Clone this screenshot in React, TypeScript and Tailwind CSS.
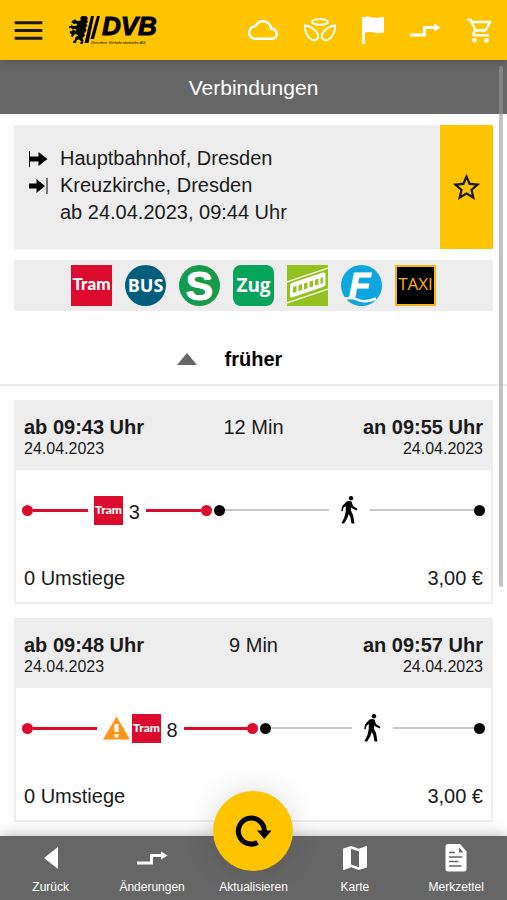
import type { ReactNode } from "react";
import {
  MdCloudQueue,
  MdMap,
  MdMenu,
  MdOutlineShoppingCart,
  MdStarBorder,
} from "react-icons/md";

type Trip = {
  departure: string;
  arrival: string;
  date: string;
  duration: string;
  line: string;
  warning: boolean;
  changes: string;
  price: string;
  rideShare: number;
};

const trips: Trip[] = [
  {
    departure: "ab 09:43 Uhr",
    arrival: "an 09:55 Uhr",
    date: "24.04.2023",
    duration: "12 Min",
    line: "3",
    warning: false,
    changes: "0 Umstiege",
    price: "3,00 €",
    rideShare: 41,
  },
  {
    departure: "ab 09:48 Uhr",
    arrival: "an 09:57 Uhr",
    date: "24.04.2023",
    duration: "9 Min",
    line: "8",
    warning: true,
    changes: "0 Umstiege",
    price: "3,00 €",
    rideShare: 51,
  },
];

const Logo = () => (
  <svg width="88" height="32" viewBox="0 0 88 32" className="overflow-visible" aria-hidden="true">
    {/* Lion */}
    <path d="M9 4l2-2 4.500.3 1.500 2-1 2 1 1.700-2 1.500 1.500 2-2 2.500 1 2.500-2.500 3 1 2-2.500 2.500 1 3-1 3-2.500-.3 1-2.500-2-2-2.500 1-.3 2.500-3.200.3.2-2 1.500-.5.5-3 3-2-2-1.500-2 .5-1.500 2.500-1.700-.5.7-2.500-2-1 .3-2 2 .3.7-1.500 2.500 1 1.500-.5-1.500-1.500-2.500.8-1.500-1.500-2 .2-.2-2 2-.2.5-1.500 1.500 1.500 3 0 1.500-1-1.500-1.500-3 .5L2 9l-1.500-.5.5-2 1.500.3L3.500 5l2 1.800 2.500.2 2-1z" />
    {/* Slashes */}
    <path d="M20 2h3l-5.500 27h-4zM26 2h3l-6 23h-3.500z" />
    <text
      x="31"
      y="21"
      fontFamily="Liberation Sans, sans-serif"
      fontSize="26"
      fontWeight="700"
      fontStyle="italic"
      stroke="#000"
    >
      DVB
    </text>
    <text
      x="20"
      y="30"
      fontFamily="Liberation Sans, sans-serif"
      fontSize="4"
      fontStyle="italic"
    >
      Dresdner Verkehrsbetriebe AG
    </text>
  </svg>
);

const AngelIcon = () => (
  <svg
    width="34"
    height="26"
    viewBox="0 0 36 26"
    fill="none"
    stroke="currentColor"
    strokeWidth="2"
    strokeLinejoin="round"
    aria-hidden="true"
  >
    <ellipse cx="18" cy="4.500" rx="8.500" ry="3" />
    <path d="M2 8c-.5 5.500 2.500 13 7.500 15.500 4 1.500 7.500-1.500 6.500-5C15 13.500 8 9 2 8z" />
    <path d="M34 8c.5 5.500-2.500 13-7.500 15.500-4 1.500-7.500-1.500-6.500-5C21 13.500 28 9 34 8z" />
  </svg>
);

const FlagIcon = () => (
  <svg width="22" height="28" viewBox="0 0 22 28" aria-hidden="true">
    <path
      d="M0 1h3c4-1.500 7 1 11 .8 3 0 5-.8 8-.8v15.500c-3 .8-5.500 1.200-8.500.5-4-1-7-1.500-10.500-.5V28H0z"
      fill="currentColor"
    />
  </svg>
);

const ChangesIcon = () => (
  <svg width="32" height="16" viewBox="0 0 32 16" aria-hidden="true">
    <path
      d="M1 13h14.500V5.500H26"
      fill="none"
      stroke="currentColor"
      strokeWidth="3"
    />
    <path d="M25 1.500l6.500 4-6.500 4z" fill="currentColor" />
  </svg>
);

const FromIcon = () => (
  <svg width="20" height="18" viewBox="0 0 20 18" aria-hidden="true">
    <path d="M1 1h1v16H1z" />
    <path d="M2 6.500h8.500V2L19.500 9l-9 7v-4.500H2z" />
  </svg>
);

const ToIcon = () => (
  <svg width="20" height="18" viewBox="0 0 20 18" aria-hidden="true">
    <path d="M1 6.500h7.500V2l8.500 7-8.500 7v-4.500H1z" />
    <path d="M18.500 1h1v16h-1z" />
  </svg>
);

const TramIcon = ({ size }: { size: number }) => (
  <svg width={size} height={size} viewBox="0 0 41 41" aria-hidden="true">
    <rect width="41" height="41" fill="#dc0a2d" />
    <text
      x="20.500"
      y="25"
      textAnchor="middle"
      fontFamily="Lato, sans-serif"
      fontSize="17"
      fontWeight="900"
      fill="#fff"
    >
      Tram
    </text>
  </svg>
);

const BusIcon = () => (
  <svg width="41" height="41" viewBox="0 0 41 41" aria-hidden="true">
    <circle cx="20.500" cy="20.500" r="20.500" fill="#005e7c" />
    <text
      x="20.500"
      y="27"
      textAnchor="middle"
      fontFamily="Open Sans, sans-serif"
      fontSize="18"
      fontWeight="700"
      fill="#fff"
    >
      BUS
    </text>
  </svg>
);

const SBahnIcon = () => (
  <svg width="41" height="41" viewBox="0 0 41 41" className="overflow-visible" aria-hidden="true">
    <circle cx="20.500" cy="20.500" r="20.500" fill="#169b4d" />
    <text
      x="20.500"
      y="35"
      textAnchor="middle"
      fontFamily="Liberation Sans, sans-serif"
      fontSize="41"
      fontWeight="700"
      fill="#fff"
      stroke="#fff"
    >
      S
    </text>
  </svg>
);

const ZugIcon = () => (
  <svg width="41" height="41" viewBox="0 0 41 41" aria-hidden="true">
    <rect width="41" height="41" rx="8" fill="#06a35a" />
    <text
      x="20.500"
      y="27"
      textAnchor="middle"
      fontFamily="Open Sans, sans-serif"
      fontSize="19"
      fontWeight="700"
      fill="#fff"
    >
      Zug
    </text>
  </svg>
);

const FunicularIcon = () => (
  <svg width="41" height="41" viewBox="0 0 41 41" aria-hidden="true">
    <rect width="41" height="41" fill="#94c11f" />
    <g stroke="#fff" strokeWidth="1.300">
      <path d="M0 17L41 3M0 38l41-14" />
    </g>
    <path d="M3 20.500q0-2 2-2.700L36 7.500q2.500-.5 2.500 1.500v10.500q0 1.500-2 2.200L5 32.500q-2 .5-2-1.500z" fill="#fff" />
    <g fill="#94c11f">
      <path d="M6 22l3.500-1.200v6L6 28zM11.500 20.200l3.500-1.200v6l-3.500 1.200zM17 18.400l3.500-1.200v6L17 24.400zM22.500 16.600l3.500-1.200v6l-3.500 1.200zM28 14.800l3.500-1.200v6L28 20.800zM33.500 13l2.500-.8v6l-2.500.8z" />
    </g>
  </svg>
);

const FerryIcon = () => (
  <svg width="41" height="41" viewBox="0 0 41 41" aria-hidden="true">
    <circle cx="20.500" cy="20.500" r="20.500" fill="#0fa5de" />
    <text
      x="8"
      y="32"
      fontFamily="Liberation Sans, sans-serif"
      fontSize="35"
      fontWeight="700"
      fontStyle="italic"
      fill="#fff"
      stroke="#fff"
    >
      F
    </text>
    <path
      d="M3 34c5-1.500 9-1.500 13 .5s10 3 19-1"
      fill="none"
      stroke="#fff"
      strokeWidth="2.500"
    />
  </svg>
);

const TaxiIcon = () => (
  <svg width="41" height="41" viewBox="0 0 41 41" aria-hidden="true">
    <rect x="1" y="1" width="39" height="39" stroke="#f5b21a" strokeWidth="2" />
    <text
      x="20.500"
      y="25"
      textAnchor="middle"
      fontFamily="Open Sans, sans-serif"
      fontSize="17"
      fill="#f5b21a"
    >
      TAXI
    </text>
  </svg>
);

const WalkIcon = () => (
  <svg width="17" height="28" viewBox="0 0 17 28" aria-hidden="true">
    <circle cx="10" cy="2.300" r="2.200" />
    <path d="M5.500 5.500q2.500-1.200 5 0l1.500 4.500 4.500 3-.9 1.600-5-2.600-.5-1.200v4.200l1.900 4L13.500 27.500h-3l-1.200-6.500-1.600-3-1.400 4.200L3 27.800l-2.500-.8 2.800-5.500 1.400-6 .1-5.500-2.300 1.700-.8 3.500L.2 15l.9-4.800z" />
  </svg>
);

const WarningIcon = () => (
  <svg width="27" height="24" viewBox="0 0 27 24" aria-hidden="true">
    <path d="M13.500.5L27 23.500H0z" fill="#ff9417" />
    <path d="M11.500 8h4v8h-4zM11.500 18h4v3.500h-4z" fill="#fff" />
  </svg>
);

const RefreshIcon = () => (
  <svg width="37" height="32" viewBox="0 0 37 32" aria-hidden="true">
    <path
      d="M29.300 16.500A13 13 0 1 0 22.500 27.500"
      fill="none"
      stroke="#000"
      strokeWidth="5"
    />
    <path d="M22 15.500h14.500L29.300 24z" />
  </svg>
);

const BackIcon = () => (
  <svg width="14" height="24" viewBox="0 0 14 24" aria-hidden="true">
    <path d="M14 1v22L0 12z" fill="currentColor" />
  </svg>
);

const NoteIcon = () => (
  <svg width="22" height="28" viewBox="0 0 22 28" aria-hidden="true">
    <path
      d="M3 0h12l6.500 7.500V25q0 2.500-2.500 2.500H3Q.5 27.500.5 25V2.500Q.5 0 3 0z"
      fill="currentColor"
    />
    <path
      d="M4 8.500h6M4 13h13.500M4 17.500h9.500M4 22h12.500"
      stroke="#666"
      strokeWidth="1.500"
    />
    <path d="M14 3.500v5h4.500z" fill="#666" />
  </svg>
);

const transports = [
  { label: "Tram", icon: <TramIcon size={41} /> },
  { label: "Bus", icon: <BusIcon /> },
  { label: "S-Bahn", icon: <SBahnIcon /> },
  { label: "Zug", icon: <ZugIcon /> },
  { label: "Seilbahn", icon: <FunicularIcon /> },
  { label: "Fähre", icon: <FerryIcon /> },
  { label: "Taxi", icon: <TaxiIcon /> },
];

const Header = () => (
  <header className="sticky top-0 z-20 flex h-[60px] items-center justify-between bg-[#fec400] pl-2.5 pr-3 shadow-md">
    <div className="flex items-center gap-6">
      <button type="button" aria-label="Menü">
        <MdMenu size={37} />
      </button>
      <a href="#" aria-label="DVB" className="text-black">
        <Logo />
      </a>
    </div>
    <nav className="flex items-center gap-[25px] text-white">
      <a href="#wetter" aria-label="Wetter">
        <MdCloudQueue size={30} />
      </a>
      <a href="#engel" aria-label="Engel">
        <AngelIcon />
      </a>
      <a href="#meldungen" aria-label="Meldungen">
        <FlagIcon />
      </a>
      <a href="#aenderungen" aria-label="Änderungen">
        <ChangesIcon />
      </a>
      <a href="#warenkorb" aria-label="Warenkorb">
        <MdOutlineShoppingCart size={29} />
      </a>
    </nav>
  </header>
);

const SearchSummary = () => (
  <section className="flex bg-[#ededed]">
    <div className="grid flex-1 grid-cols-[auto_1fr] content-start items-center gap-x-3 pt-5 pb-[23px] pl-3.5 leading-[27px]">
      <FromIcon />
      <p>Hauptbahnhof, Dresden</p>
      <ToIcon />
      <p>Kreuzkirche, Dresden</p>
      <p className="col-start-2">ab 24.04.2023, 09:44 Uhr</p>
    </div>
    <button
      type="button"
      aria-label="Merken"
      className="flex w-[53px] items-center justify-center bg-[#fec400]"
    >
      <MdStarBorder size={33} />
    </button>
  </section>
);

const RideLeg = ({ trip }: { trip: Trip }) => (
  <div className="flex items-center" style={{ width: `${trip.rideShare}%` }}>
    <span className="size-[11px] rounded-full bg-[#dc0a2d]"></span>
    <span className="h-[3px] flex-1 bg-[#dc0a2d]"></span>
    <span className="flex items-center gap-1.5 px-1.5">
      <span className="flex items-center gap-0.5">
        {trip.warning && <WarningIcon />}
        <TramIcon size={29} />
      </span>
      <span className="pt-1">{trip.line}</span>
    </span>
    <span className="h-[3px] flex-1 bg-[#dc0a2d]"></span>
    <span className="size-[11px] rounded-full bg-[#dc0a2d]"></span>
  </div>
);

const WalkLeg = () => (
  <div className="flex flex-1 items-center">
    <span className="size-[11px] rounded-full bg-black"></span>
    <span className="h-0.5 flex-1 bg-[#c6c6c6]"></span>
    <span className="px-3">
      <WalkIcon />
    </span>
    <span className="h-0.5 flex-1 bg-[#c6c6c6]"></span>
    <span className="size-[11px] rounded-full bg-black"></span>
  </div>
);

const TripCard = ({ trip }: { trip: Trip }) => (
  <article className="border-2 border-[#eeeeee]">
    <div className="grid grid-cols-[1fr_auto_1fr] bg-[#ededed] px-2 pt-[13px] pb-[11px] leading-6">
      <div>
        <p className="font-bold">{trip.departure}</p>
        <p className="text-base leading-5">{trip.date}</p>
      </div>
      <p>{trip.duration}</p>
      <div className="text-right">
        <p className="font-bold">{trip.arrival}</p>
        <p className="text-base leading-5">{trip.date}</p>
      </div>
    </div>
    <div className="flex h-20 items-center gap-0.5 px-1.5">
      <RideLeg trip={trip} />
      <WalkLeg />
    </div>
    <div className="flex justify-between px-2 pt-4 pb-3 leading-6">
      <p>{trip.changes}</p>
      <p>{trip.price}</p>
    </div>
  </article>
);

const NavItem = ({ icon, text }: { icon: ReactNode; text: string }) => (
  <a href="#" className="flex flex-col items-center">
    <span className="flex h-[43px] items-center">{icon}</span>
    <span className="leading-4">{text}</span>
  </a>
);

const BottomBar = () => (
  <footer className="sticky bottom-0 z-20 h-16 bg-[#666666] text-xs text-white shadow-[0_0_14px_rgba(0,0,0,0.3)]">
    <nav className="grid grid-cols-5">
      <NavItem icon={<BackIcon />} text="Zurück" />
      <NavItem icon={<ChangesIcon />} text="Änderungen" />
      <button type="button" className="relative flex flex-col items-center pt-[43px]">
        <span className="absolute bottom-6 flex size-20 items-center justify-center rounded-full bg-[#fec400] shadow-[0_0_30px_rgba(0,0,0,0.15)]">
          <RefreshIcon />
        </span>
        <span className="leading-4">Aktualisieren</span>
      </button>
      <NavItem icon={<MdMap size={32} />} text="Karte" />
      <NavItem icon={<NoteIcon />} text="Merkzettel" />
    </nav>
  </footer>
);

export default function App() {
  return (
    <div className="flex min-h-screen flex-col bg-white font-['Liberation_Sans',Arial,sans-serif] text-xl text-[#1a1a1a]">
      <Header />
      <h1 className="bg-[#666666] pt-3.5 pb-3 text-center text-[21px] leading-7 text-white">
        Verbindungen
      </h1>
      <main className="flex-1">
        <div className="flex flex-col gap-[11px] px-3.5 pt-[11px]">
          <SearchSummary />
          <div className="flex justify-center gap-[13px] bg-[#ededed] py-[5px]">
            {transports.map((item) => (
              <button type="button" key={item.label} aria-label={item.label}>
                {item.icon}
              </button>
            ))}
          </div>
        </div>
        <button
          type="button"
          className="mt-2 grid w-full grid-cols-[1fr_auto_1fr] items-center border-b-2 border-[#eeeeee] pt-[26px] pb-[11px] leading-7 font-bold text-black"
        >
          <svg
            width="20"
            height="12"
            viewBox="0 0 20 12"
            className="mr-7 justify-self-end"
            aria-hidden="true"
          >
            <path d="M10 0l10 12H0z" fill="#666" />
          </svg>
          früher
        </button>
        <div className="flex flex-col gap-3.5 px-3.5 py-3.5">
          {trips.map((trip) => (
            <TripCard key={trip.departure} trip={trip} />
          ))}
        </div>
      </main>
      <BottomBar />
      {/* Scroll indicator */}
      <div className="fixed top-[66px] right-1 z-30 h-[521px] w-1 rounded-sm bg-[#999999]/60"></div>
    </div>
  );
}
